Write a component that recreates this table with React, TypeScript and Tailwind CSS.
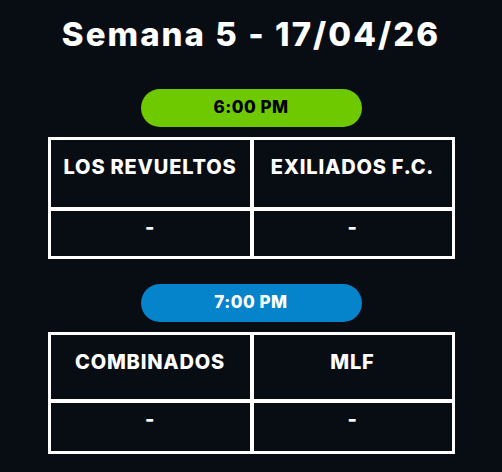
import clsx from "clsx";

type Match = {
    time: string;
    pill: string;
    pillText: string;
    home: string;
    away: string;
    headH: string;
    bodyH: string;
};

const matches: Match[] = [
    {
        time: "6:00 PM",
        pill: "bg-[#6fc900]",
        pillText: "text-black",
        home: "LOS REVUELTOS",
        away: "EXILIADOS F.C.",
        headH: "h-[67px]",
        bodyH: "h-[45px]",
    },
    {
        time: "7:00 PM",
        pill: "bg-[#0584cc]",
        pillText: "text-white",
        home: "COMBINADOS",
        away: "MLF",
        headH: "h-[64px]",
        bodyH: "h-[48px]",
    },
];

export default function App() {
    return (
        <div className="w-full min-h-[472px] bg-[#080c13] flex flex-col items-center font-['Inter',sans-serif] text-white">
            {/* ===== TITLE ===== */}
            <h1 className="pt-[14px] text-[33px] leading-[40px] font-extrabold tracking-[0.062em]">
                Semana 5 - 17/04/26
            </h1>

            <div className="mt-[35px] flex flex-col gap-[25px]">
                {matches.map((m) => (
                    <MatchBlock key={m.time} match={m} />
                ))}
            </div>
        </div>
    );
}

/* =========================================================
   MATCH BLOCK
   ========================================================= */

function MatchBlock({match}: {match: Match}) {
    return (
        <div className="flex flex-col items-center gap-[10px]">
            <div
                className={clsx(
                    "w-[221px] h-[38px] rounded-full flex items-center justify-center pb-[3px] text-[17px] leading-[22px] font-extrabold tracking-[0.03em]",
                    match.pill,
                    match.pillText,
                )}
            >
                {match.time}
            </div>

            <div className="w-[407px] bg-white p-[3px] grid grid-cols-[199px_198px] gap-[4px]">
                <Cell className={clsx(match.headH, "pt-[15px]")}>{match.home}</Cell>
                <Cell className={clsx(match.headH, "pt-[15px]")}>{match.away}</Cell>
                <Cell className={clsx(match.bodyH, "pt-[4px]")}>-</Cell>
                <Cell className={clsx(match.bodyH, "pt-[4px]")}>-</Cell>
            </div>
        </div>
    );
}

function Cell({className, children}: {className?: string; children: React.ReactNode}) {
    return (
        <div
            className={clsx(
                "bg-[#080c13] flex justify-center text-[20px] leading-[24px] font-extrabold tracking-[0.04em] whitespace-nowrap",
                className,
            )}
        >
            {children}
        </div>
    );
}
